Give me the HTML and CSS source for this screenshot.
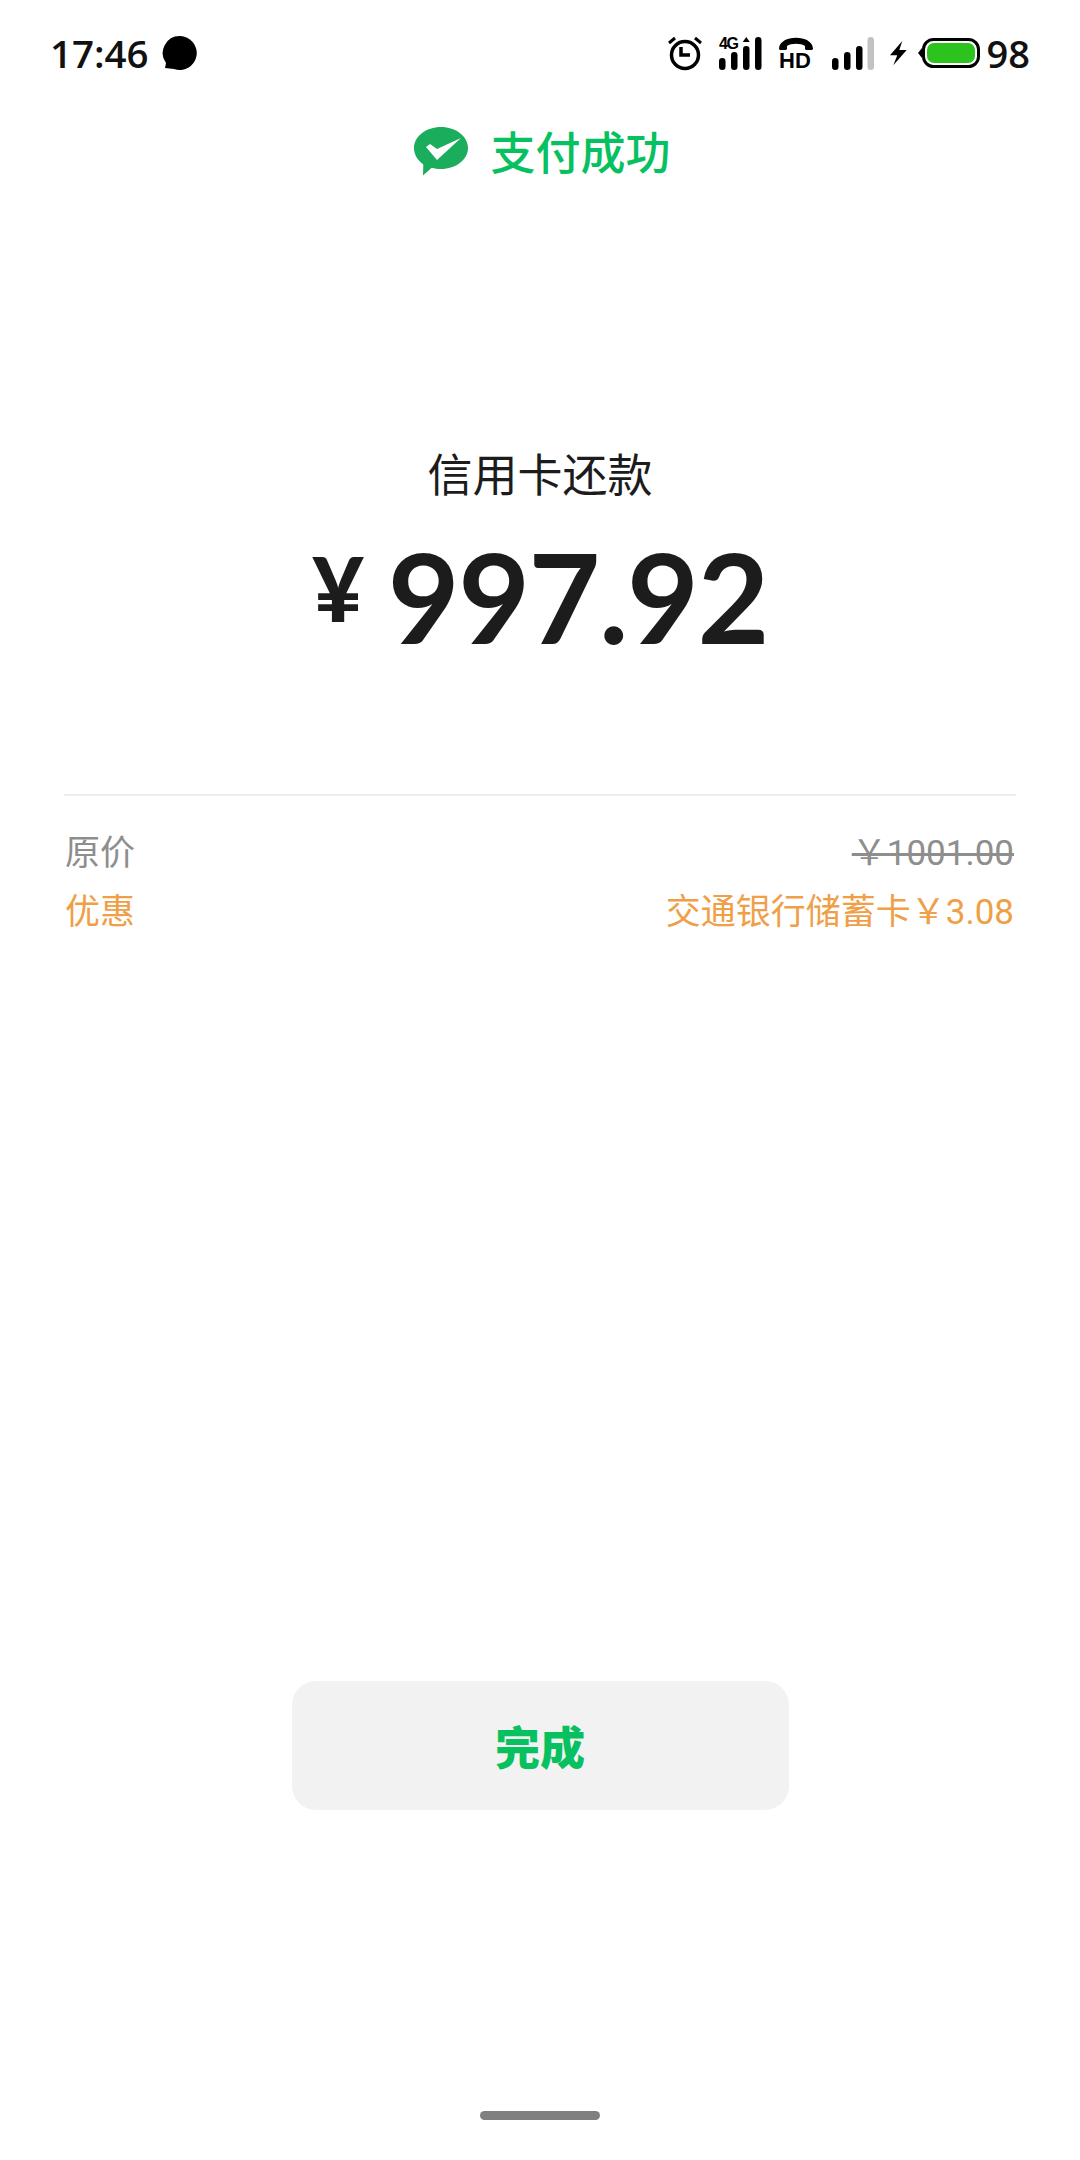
FILE: index.html
```html
<!DOCTYPE html>
<html lang="zh-CN">
<head>
    <meta charset="UTF-8">
    <meta name="viewport" content="width=device-width, initial-scale=1.0">
    <title>支付成功</title>
    <link rel="stylesheet" href="styles.css">
</head>
<body>
    <div class="status-bar">
        <div class="status-left">
            <span class="time">17:46</span>
            <svg class="bubble" width="36" height="36" viewBox="0 0 36 36">
                <path d="M18 1a17 17 0 1 1-6 33l-9-1 1-5A17 17 0 0 1 18 1z" fill="#000"/>
            </svg>
        </div>
        <div class="status-right">
            <svg class="alarm" width="34" height="34" viewBox="0 0 34 34" fill="none" stroke="#000">
                <circle cx="17" cy="19" r="13.500" stroke-width="3.500"/>
                <path d="M13 11v8h9" stroke-width="3.500"/>
                <path d="M1 7l6-5M33 7l-6-5" stroke-width="3"/>
            </svg>
            <svg class="sig-4g" width="43" height="34" viewBox="0 0 43 34">
                <text x="0" y="13" class="tiny">4G</text>
                <rect x="0" y="22" width="6.500" height="12" rx="3.250"/>
                <rect x="12" y="16" width="6.500" height="18" rx="3.250"/>
                <rect x="24" y="10" width="6.500" height="24" rx="3.250"/>
                <path d="M27.250 1l3.500 5h-7z"/>
                <rect x="36" y="1" width="6.500" height="33" rx="3.250"/>
            </svg>
            <svg class="hd" width="34" height="34" viewBox="0 0 34 34">
                <path d="M0 13c0-15 34-15 34 0l-1 1h-6l-1-1v-3c-4-3-14-3-18 0v3l-1 1H1z"/>
                <text x="0" y="32" class="hd-text">HD</text>
            </svg>
            <svg class="sig" width="42" height="34" viewBox="0 0 42 34">
                <rect x="0" y="22" width="6.500" height="12" rx="3.250"/>
                <rect x="12" y="16" width="6.500" height="18" rx="3.250"/>
                <rect x="24" y="10" width="6.500" height="24" rx="3.250"/>
                <rect x="35.500" y="1" width="6.500" height="33" rx="3.250" fill="#c2c2c2"/>
            </svg>
            <svg class="bolt" width="17" height="25" viewBox="0 0 17 25">
                <path d="M12.300 0L0 14.300h7.300l-4 10L16.700 9H9.300z"/>
            </svg>
            <svg class="battery" width="62" height="30" viewBox="0 0 62 30">
                <path d="M0 15l4-5v10z"/>
                <rect x="5.500" y="1.500" width="55" height="27" rx="10" fill="#fff" stroke="#000" stroke-width="3"/>
                <rect x="9" y="5" width="48" height="20" rx="7" fill="#2cc31f"/>
            </svg>
            <span class="level">98</span>
        </div>
    </div>

    <div class="result-head">
        <svg class="wechat-pay" width="54" height="49" viewBox="0 0 54 49">
            <path d="M27 0c14.900 0 27 9.400 27 21s-12.100 21-27 21c-3.300 0-6.400-.5-9.300-1.300L9 48.500l.3-11.100C3.600 33.500 0 27.600 0 21 0 9.400 12.100 0 27 0z" fill="#1aad5c"/>
            <path d="M12 20l4-3 7 5 24-11-24 22z" fill="#fff"/>
        </svg>
        <span class="result-text">支付成功</span>
    </div>

    <div class="payee">信用卡还款</div>
    <div class="amount"><span class="yen">¥</span><span class="digits">997.92</span></div>

    <div class="details">
        <div class="row gray">
            <span>原价</span>
            <span class="num"><s>￥1001.00</s></span>
        </div>
        <div class="row orange">
            <span>优惠</span>
            <span class="num">交通银行储蓄卡￥3.08</span>
        </div>
    </div>

    <button class="done">完成</button>
    <div class="home-bar"></div>
</body>
</html>
```
FILE: styles.css
```css
html, body {
    margin: 0;
    padding: 0;
}
body {
    width: 1080px;
    height: 2160px;
    background-color: #fff;
    font-family: "Noto Sans CJK SC", "Noto Sans", sans-serif;
    display: flex;
    flex-direction: column;
    align-items: center;
    overflow: hidden;
}
.status-bar {
    box-sizing: border-box;
    width: 100%;
    height: 106px;
    padding: 0 50px;
    display: flex;
    justify-content: space-between;
    align-items: center;
}
.status-left, .status-right {
    display: flex;
    align-items: center;
}
.time {
    font-family: "Open Sans", sans-serif;
    font-weight: 600;
    font-size: 38.500px;
    line-height: 50px;
    color: #111;
}
.bubble {
    margin-left: 13px;
}
.status-right svg {
    fill: #000;
    overflow: visible;
}
.status-right .alarm {
    fill: none;
    margin-right: 17px;
}
.sig-4g {
    margin-right: 17px;
}
.hd {
    margin-right: 19px;
}
.sig {
    margin-right: 16px;
}
.bolt {
    margin-right: 11px;
}
.battery {
    margin-right: 7px;
}
.tiny {
    font-family: "Liberation Sans", sans-serif;
    font-weight: 700;
    font-size: 16px;
    letter-spacing: -1.5px;
}
.hd-text {
    font-family: "Liberation Sans", sans-serif;
    font-weight: 700;
    font-size: 22px;
}
.level {
    font-family: "Open Sans", sans-serif;
    font-weight: 600;
    font-size: 38px;
    line-height: 50px;
    color: #111;
}
.result-head {
    margin-top: 18px;
    padding-left: 5px;
    display: flex;
    align-items: center;
    gap: 22px;
}
.result-text {
    font-size: 45px;
    line-height: 54px;
    font-weight: 500;
    color: #07c160;
}
.payee {
    margin-top: 265px;
    font-size: 45px;
    line-height: 60px;
    color: #1c1c1c;
}
.amount {
    margin-top: 23px;
    display: flex;
    align-items: flex-start;
    font-family: Lato, sans-serif;
    font-weight: 700;
    color: #1c1c1c;
}
.yen {
    margin-top: 2px;
    margin-right: 24px;
    font-size: 89px;
    font-weight: 900;
    line-height: 120px;
}
.digits {
    font-size: 124px;
    line-height: 140px;
    letter-spacing: -1.500px;
}
.details {
    box-sizing: border-box;
    width: 952px;
    margin-top: 128px;
    padding-top: 24px;
    border-top: 2px solid #ededed;
}
.row {
    height: 59px;
    padding: 0 2px 0 1px;
    display: flex;
    justify-content: space-between;
    align-items: baseline;
    font-size: 35px;
    line-height: 59px;
}
.gray {
    color: #8e8e8e;
}
.orange {
    color: #ef9f47;
}
.num {
    font-family: Roboto, "Noto Sans CJK SC", sans-serif;
}
.done {
    width: 497px;
    height: 129px;
    margin-top: 743px;
    padding: 0;
    border: none;
    border-radius: 24px;
    background-color: #f2f2f2;
    color: #07c160;
    font-family: "Noto Sans CJK SC", sans-serif;
    font-weight: 900;
    font-size: 45px;
}
.home-bar {
    width: 120px;
    height: 9px;
    margin-top: 301px;
    border-radius: 5px;
    background-color: #808080;
}
```
